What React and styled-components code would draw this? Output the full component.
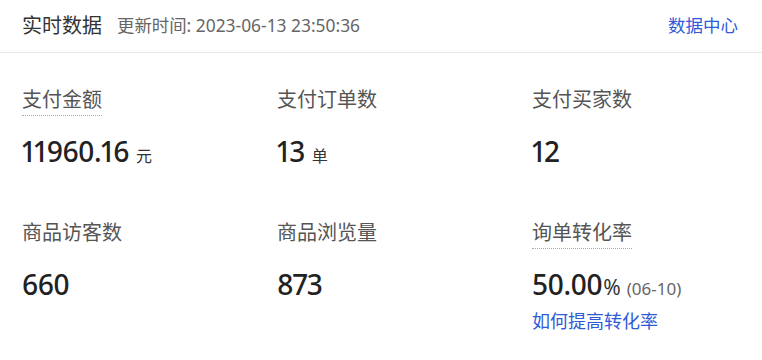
import React from "react";
import styled, { createGlobalStyle } from "styled-components";

const Global = createGlobalStyle`
  html, body { margin: 0; padding: 0; background: #fff; }
  body { font-family: "Noto Sans", "Noto Sans CJK SC", sans-serif; color: #333; }
`;

const Panel = styled.div`
  width: 762px;
  height: 360px;
  background: #fff;
  box-sizing: border-box;
`;

const Header = styled.div`
  height: 53px;
  box-sizing: border-box;
  border-bottom: 1px solid #e8e8e8;
  display: flex;
  align-items: center;
  padding: 0 24px 3px 22px;
`;

const Title = styled.span`
  font-family: "Noto Sans CJK SC", sans-serif;
  font-size: 20px;
  color: #333;
`;

const Meta = styled.span`
  margin-left: 15px;
  font-family: "Noto Sans", "Noto Sans CJK SC", sans-serif;
  font-size: 17.4px;
  color: #666;
`;

const Link = styled.a`
  font-family: "Noto Sans CJK SC", sans-serif;
  font-size: 17.5px;
  color: #2f5bd8;
  text-decoration: none;
  margin-left: ${(p) => (p.$push ? "auto" : "0")};
`;

const Grid = styled.div`
  display: grid;
  grid-template-columns: repeat(3, 255px);
  grid-auto-rows: 133px;
  padding: 32px 0 0 22px;
`;

const Cell = styled.div`
  display: flex;
  flex-direction: column;
  align-items: flex-start;
`;

const Label = styled.span`
  font-family: "Noto Sans CJK SC", sans-serif;
  font-size: 20px;
  line-height: 28px;
  color: #555;
  padding-bottom: 2px;
  border-bottom: 1px ${(p) => (p.$tip ? "dotted #aaa" : "solid transparent")};
`;

const ValueRow = styled.div`
  margin-top: 17px;
  display: flex;
  align-items: baseline;
  height: 36px;
  line-height: 36px;
`;

const Value = styled.span`
  font-family: "Noto Sans", sans-serif;
  font-weight: 500;
  font-size: 28px;
  letter-spacing: -0.6px;
  font-variant-numeric: proportional-nums;
  color: #222;
`;

const Unit = styled.span`
  margin-left: ${(p) => (p.$tight ? "1px" : "7px")};
  font-family: "Noto Sans", "Noto Sans CJK SC", sans-serif;
  font-size: ${(p) => (p.$big ? "21px" : "16px")};
  color: #333;
`;

const Extra = styled.span`
  margin-left: 6px;
  font-family: "Noto Sans", sans-serif;
  font-size: 17px;
  color: #666;
`;

const SubLink = styled(Link)`
  margin-top: 5px;
  font-size: 18px;
  line-height: 26px;
`;

const items = [
  { label: "支付金额", value: "11960.16", unit: "元", tip: true },
  { label: "支付订单数", value: "13", unit: "单" },
  { label: "支付买家数", value: "12" },
  { label: "商品访客数", value: "660" },
  { label: "商品浏览量", value: "873" },
  {
    label: "询单转化率",
    value: "50.00",
    unit: "%",
    tight: true,
    big: true,
    extra: "(06-10)",
    tip: true,
    link: "如何提高转化率",
  },
];

export default function App() {
  return (
    <Panel>
      <Global />
      <Header>
        <Title>实时数据</Title>
        <Meta>更新时间: 2023-06-13 23:50:36</Meta>
        <Link $push href="#">数据中心</Link>
      </Header>
      <Grid>
        {items.map((it) => (
          <Cell key={it.label}>
            <Label $tip={it.tip}>{it.label}</Label>
            <ValueRow>
              <Value>{it.value}</Value>
              {it.unit && (
                <Unit $tight={it.tight} $big={it.big}>
                  {it.unit}
                </Unit>
              )}
              {it.extra && <Extra>{it.extra}</Extra>}
            </ValueRow>
            {it.link && <SubLink href="#">{it.link}</SubLink>}
          </Cell>
        ))}
      </Grid>
    </Panel>
  );
}
